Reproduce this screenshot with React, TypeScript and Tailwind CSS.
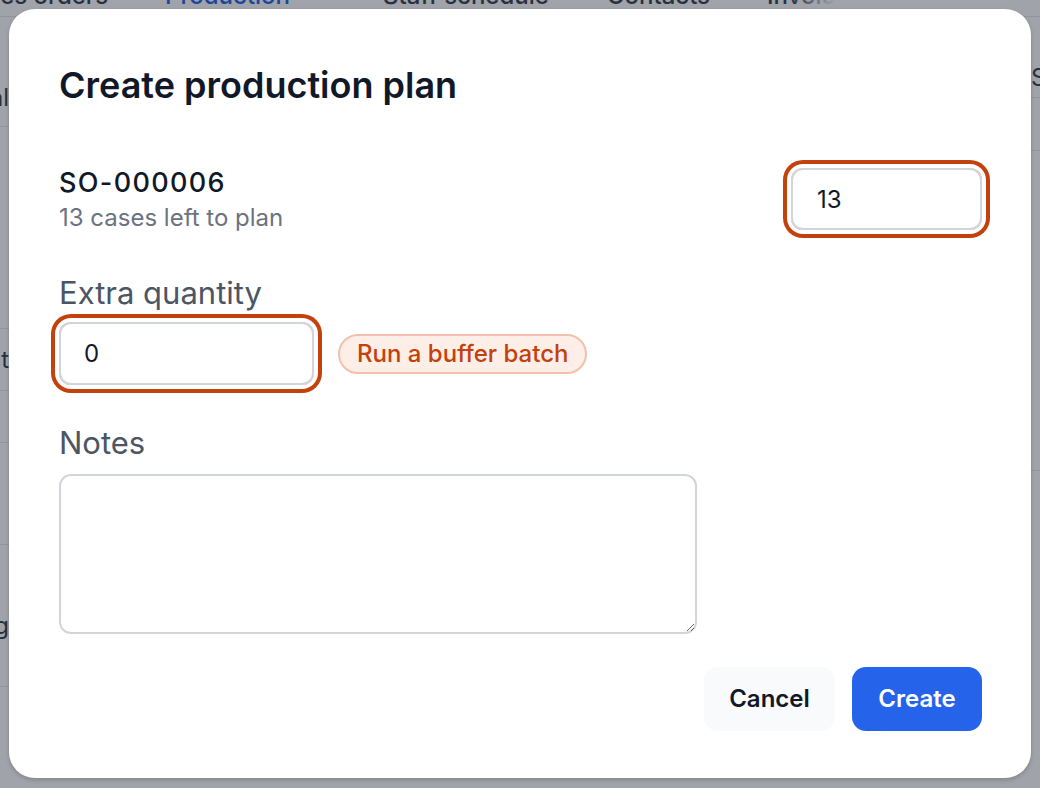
import React from "react";

function BgRow({ h, text, side, pad = "" }: { h: string; text?: string; side: "left" | "right"; pad?: string }) {
  return (
    <div className={`flex border-b border-[#e5e7eb] ${h} ${pad} ${side === "left" ? "justify-end" : "justify-start"}`}>
      <span className="whitespace-nowrap text-[24px] leading-[30px] text-[#374151]">{text}</span>
    </div>
  );
}

export default function App() {
  return (
    <div className="relative h-[788px] w-full overflow-hidden bg-white font-['Inter',sans-serif]">
      {/* page behind the dialog */}
      <div className="flex h-full flex-col">
        <nav className="relative -mt-[24px] flex h-[40px] shrink-0 items-center whitespace-nowrap text-[24px] font-medium text-[#374151]">
          <span className="-ml-[35px]">Sales orders</span>
          <span className="ml-[57px] flex items-center text-[#2563eb]">
            Production
            <svg className="ml-[16px] h-[14px] w-[14px]" viewBox="0 0 24 24" fill="none" stroke="currentColor" strokeWidth="3" strokeLinecap="round" strokeLinejoin="round">
              <path d="m6 9 6 6 6-6" />
            </svg>
          </span>
          <span className="ml-[63px]">Staff schedule</span>
          <span className="ml-[58px]">Contacts</span>
          <span className="ml-[57px]">Invoices</span>
          <span className="ml-[57px]">Reports</span>
          <div className="absolute left-[790px] top-0 h-full w-[300px] bg-gradient-to-r from-transparent from-0% via-white via-15% to-white" />
        </nav>
        <div className="flex flex-1 justify-between border-t border-[#e5e7eb] pt-[26px]">
          <div className="flex w-[9px] flex-col overflow-hidden">
            <BgRow side="left" h="h-[84px]" pad="pt-[40px]" text="Total" />
            <BgRow side="left" h="h-[202px]" />
            <BgRow side="left" h="h-[62px]" pad="pt-[16px]" text="Product" />
            <BgRow side="left" h="h-[52px]" />
            <BgRow side="left" h="h-[102px]" />
            <BgRow side="left" h="h-[142px]" pad="pt-[66px]" text="Shipping" />
          </div>
          <div className="flex w-[9px] flex-col overflow-hidden">
            <BgRow side="right" h="h-[55px]" pad="pt-[20px]" text="Status" />
            <BgRow side="right" h="h-[53px]" />
            <BgRow side="right" h="h-[320px]" />
          </div>
        </div>
      </div>

      {/* overlay */}
      <div className="absolute inset-0 bg-[#111827]/40" />

      {/* dialog */}
      <div className="absolute left-[9px] top-[9px] flex h-[769px] w-[1022px] flex-col rounded-[26px] bg-white pl-[50px] pr-[49px] pt-[54px] shadow-[0_2px_4px_rgba(0,0,0,0.18)]">
        <h2 className="text-[36px] font-semibold leading-[44px] text-[#111827]">
          Create production plan
        </h2>

        <div className="mt-[60px] flex items-start justify-between">
          <div>
            <div className="text-[27px] font-medium leading-[32px] tracking-[0.05em] text-[#111827]">SO-000006</div>
            <div className="mt-[5px] text-[24px] leading-[28px] text-[#6b7280]">13 cases left to plan</div>
          </div>
          <input
            defaultValue="13"
            className="mt-px h-[62px] w-[191px] rounded-xl border-2 border-[#d1d5db] px-[24px] text-[24px] text-[#111827] outline-none ring-4 ring-[#c2410c] ring-offset-4"
          />
        </div>

        <label className="mt-[43px] text-[31px] leading-[36px] text-[#4b5563]">Extra quantity</label>
        <div className="mt-[11px] flex items-center gap-[24px]">
          <input
            defaultValue="0"
            className="h-[63px] w-[255px] rounded-xl border-2 border-[#d1d5db] px-[23px] text-[24px] text-[#111827] outline-none ring-4 ring-[#c2410c] ring-offset-4"
          />
          <span className="flex h-[40px] items-center rounded-full border-2 border-[#f3c0ad] bg-[#fdeee7] px-[17px] text-[24px] font-medium text-[#c2410c]">
            Run a buffer batch
          </span>
        </div>

        <label className="mt-[40px] text-[31px] leading-[36px] text-[#4b5563]">Notes</label>
        <textarea className="mt-[13px] h-[160px] w-[638px] rounded-xl border-2 border-[#d1d5db] px-[20px] py-[14px] text-[22px] text-[#111827] outline-none" />

        <div className="mt-[33px] flex justify-end gap-[17px]">
          <button className="h-[64px] w-[131px] rounded-[14px] bg-[#f8fafc] text-[24px] font-semibold text-[#111827]">
            Cancel
          </button>
          <button className="h-[64px] w-[130px] rounded-[14px] bg-[#2563eb] text-[24px] font-semibold text-white">
            Create
          </button>
        </div>
      </div>
    </div>
  );
}
